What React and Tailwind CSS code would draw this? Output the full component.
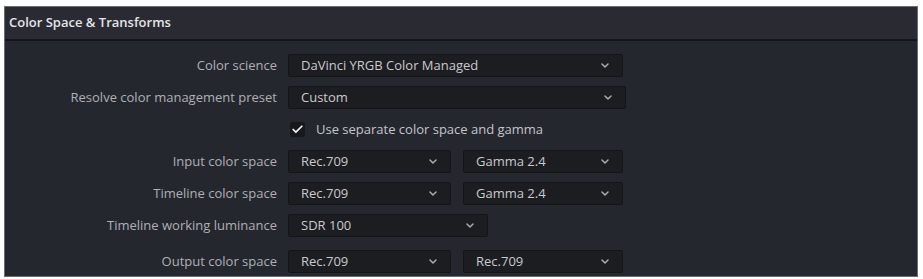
import { Check } from 'lucide-react';

const font = { fontFamily: '"Open Sans", "Liberation Sans", sans-serif' };

function Chevron() {
  return (
    <svg width="8" height="5" viewBox="0 0 8 5" className="shrink-0">
      <path d="M1 1 L4 4 L7 1" fill="none" stroke="#a9abb2" strokeWidth="1.5" strokeLinecap="round" strokeLinejoin="round" />
    </svg>
  );
}

function Select({ value, width }) {
  return (
    <div
      className={`${width} h-[23px] flex items-center justify-between pl-3 pr-[13px] bg-[#1c1d21] border border-[#141518] rounded-[2px] text-[13px] text-[#c9cacd]`}
    >
      <span className="truncate">{value}</span>
      <Chevron />
    </div>
  );
}

function Row({ label, children, className = '' }) {
  return (
    <div className={`flex items-center h-[23px] ${className}`}>
      <div className="w-[272px] text-right text-[13px] text-[#aeb0b6] whitespace-nowrap">{label}</div>
      <div className="flex items-center gap-3 pl-[11px]">{children}</div>
    </div>
  );
}

export default function App() {
  return (
    <div className="w-[923px] h-[279px] bg-white pt-[6px] pl-[4px]" style={font}>
      <div className="w-[914px] h-[271px] bg-[#25272e] border border-[#6b6c70] flex flex-col">
        {/* Header */}
        <div className="h-[34px] shrink-0 bg-[#2a2b32] border-b-2 border-[#131418] flex items-center px-[4px]">
          <span className="text-[13px] font-semibold text-[#e4e4e6]">Color Space &amp; Transforms</span>
        </div>

        {/* Settings */}
        <div className="flex flex-col gap-[9px] pt-[13px]">
          <Row label="Color science">
            <Select value="DaVinci YRGB Color Managed" width="w-[335px]" />
          </Row>
          <Row label="Resolve color management preset">
            <Select value="Custom" width="w-[338px]" />
          </Row>
          <Row label="">
            <div className="flex items-center gap-[11px] pl-[2px]">
              <div className="w-[15px] h-[15px] bg-[#17181b] rounded-[2px] flex items-center justify-center">
                <Check size={13} strokeWidth={3.2} color="#f2f2f2" />
              </div>
              <span className="text-[13px] text-[#c4c5c9]">Use separate color space and gamma</span>
            </div>
          </Row>
          <Row label="Input color space">
            <Select value="Rec.709" width="w-[163px]" />
            <Select value="Gamma 2.4" width="w-[160px]" />
          </Row>
          <Row label="Timeline color space">
            <Select value="Rec.709" width="w-[163px]" />
            <Select value="Gamma 2.4" width="w-[160px]" />
          </Row>
          <Row label="Timeline working luminance">
            <Select value="SDR 100" width="w-[200px]" />
          </Row>
          <Row label="Output color space" className="mt-[4px]">
            <Select value="Rec.709" width="w-[163px]" />
            <Select value="Rec.709" width="w-[160px]" />
          </Row>
        </div>
      </div>
    </div>
  );
}
